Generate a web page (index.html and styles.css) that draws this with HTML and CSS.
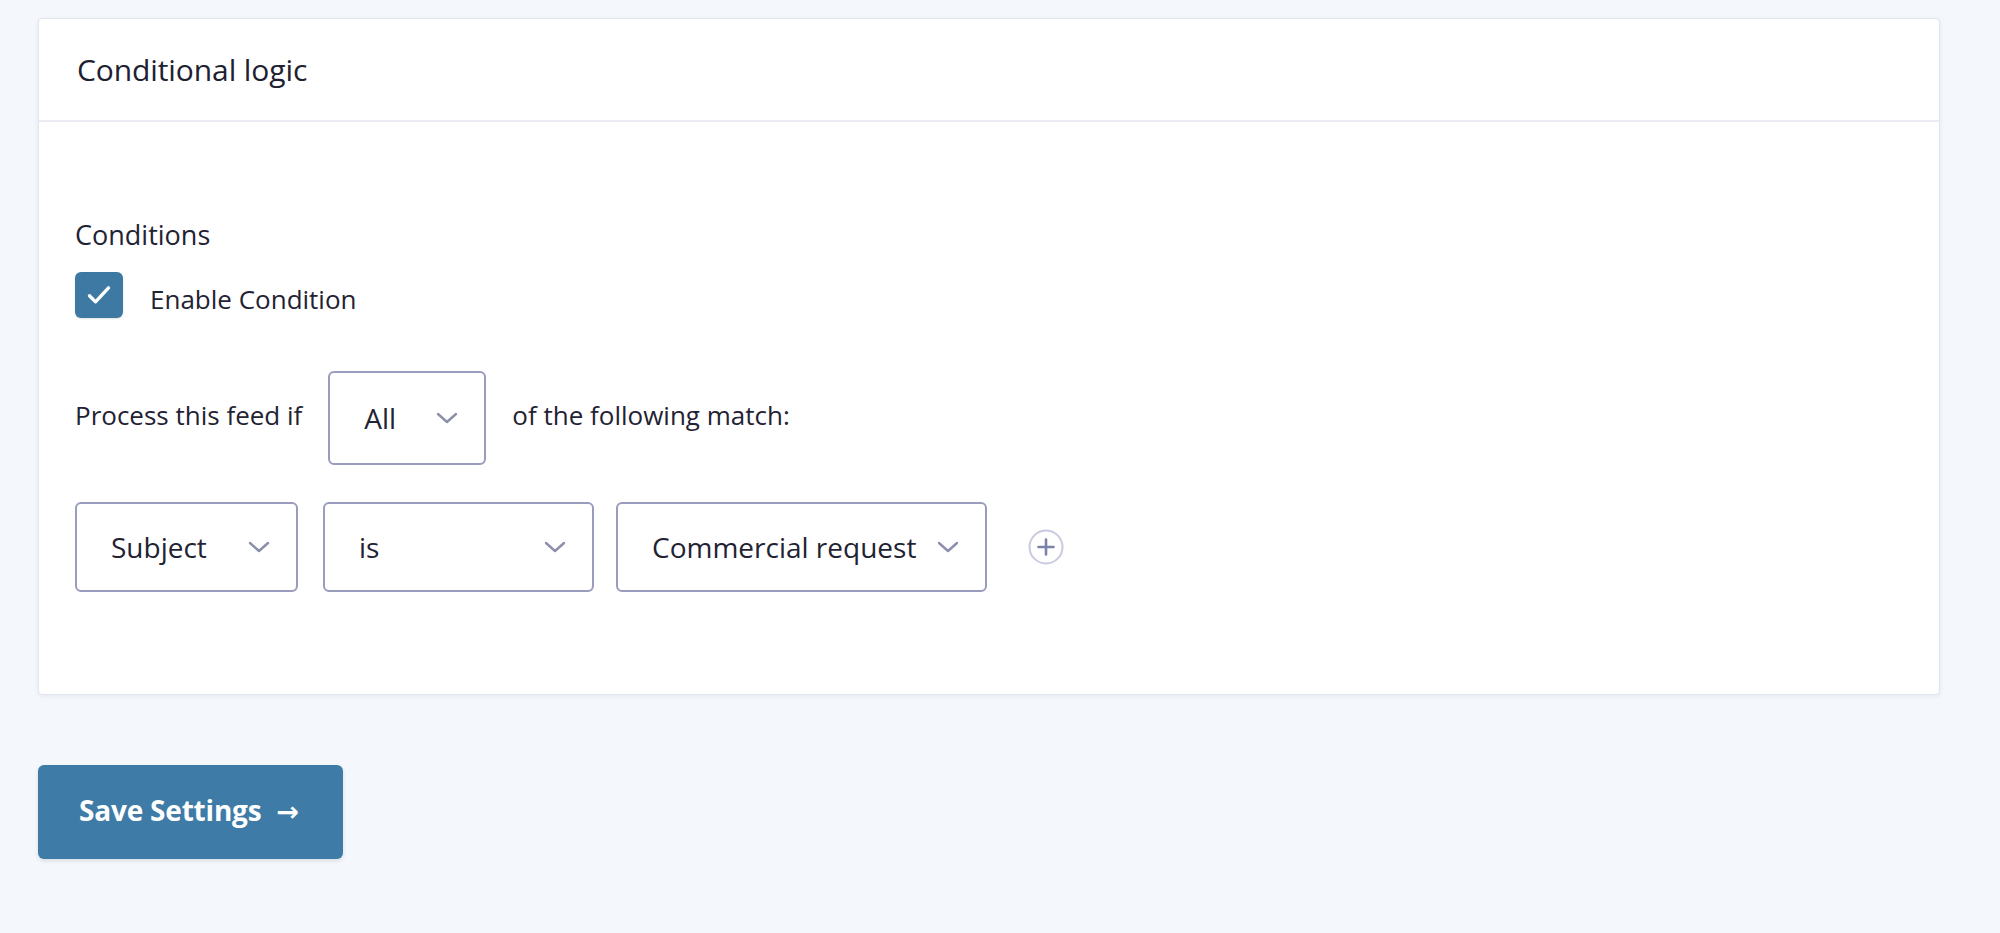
FILE: index.html
```html
<!DOCTYPE html>
<html lang="en">
<head>
<meta charset="utf-8">
<title>Conditional logic</title>
<link rel="stylesheet" href="styles.css">
</head>
<body>
<main class="page">
  <section class="card">
    <header class="card-header">
      <h2 class="card-title">Conditional logic</h2>
    </header>
    <div class="card-body">
      <div class="field-label">Conditions</div>
      <label class="check-row">
        <span class="checkbox">
          <svg viewBox="0 0 24 24" width="38" height="38" aria-hidden="true"><path d="M6 12.5l3.8 3.8L18 7.5" fill="none" stroke="#fff" stroke-width="2.1" stroke-linecap="round" stroke-linejoin="round"/></svg>
        </span>
        <span class="check-text">Enable Condition</span>
      </label>
      <div class="match-row">
        <span class="inline-text">Process this feed if</span>
        <div class="select select-all">
          <span class="select-value">All</span>
          <svg class="chevron" viewBox="0 0 22 12" width="22" height="12" aria-hidden="true"><path d="M2 2l9 8 9-8" fill="none" stroke="currentColor" stroke-width="2.4" stroke-linecap="round" stroke-linejoin="round"/></svg>
        </div>
        <span class="inline-text">of the following match:</span>
      </div>
      <div class="rule-row">
        <div class="select select-field">
          <span class="select-value">Subject</span>
          <svg class="chevron" viewBox="0 0 22 12" width="22" height="12" aria-hidden="true"><path d="M2 2l9 8 9-8" fill="none" stroke="currentColor" stroke-width="2.4" stroke-linecap="round" stroke-linejoin="round"/></svg>
        </div>
        <div class="select select-op">
          <span class="select-value">is</span>
          <svg class="chevron" viewBox="0 0 22 12" width="22" height="12" aria-hidden="true"><path d="M2 2l9 8 9-8" fill="none" stroke="currentColor" stroke-width="2.4" stroke-linecap="round" stroke-linejoin="round"/></svg>
        </div>
        <div class="select select-val">
          <span class="select-value">Commercial request</span>
          <svg class="chevron" viewBox="0 0 22 12" width="22" height="12" aria-hidden="true"><path d="M2 2l9 8 9-8" fill="none" stroke="currentColor" stroke-width="2.4" stroke-linecap="round" stroke-linejoin="round"/></svg>
        </div>
        <button class="add-btn" type="button" aria-label="Add condition">
          <svg viewBox="0 0 36 36" width="36" height="36" aria-hidden="true">
            <circle cx="18" cy="18" r="16.5" fill="none" stroke="#c8cadf" stroke-width="2"/>
            <path d="M18 10.5v15M10.5 18h15" stroke="#7a82a8" stroke-width="2.6" stroke-linecap="round"/>
          </svg>
        </button>
      </div>
    </div>
  </section>
  <button class="save-btn" type="button">Save Settings <span class="arrow">&rarr;</span></button>
</main>
</body>
</html>
```

FILE: styles.css
```css
* { box-sizing: border-box; }

html, body {
  margin: 0;
  padding: 0;
  background: #f4f7fb;
}

body {
  font-family: "Open Sans", "Noto Sans", sans-serif;
  color: #1f2333;
}

.page {
  padding: 18px 0 40px 38px;
  width: 1940px;
}

.card {
  background: #fff;
  border: 1px solid #e2e4ee;
  border-radius: 4px;
  box-shadow: 0 1px 4px rgba(40, 45, 90, 0.08);
}

.card-header {
  height: 103px;
  display: flex;
  align-items: center;
  padding-left: 38px;
  border-bottom: 2px solid #ebecf3;
}

.card-title {
  margin: 0;
  font-size: 30px;
  font-weight: 400;
  letter-spacing: -0.1px;
  color: #1d2131;
}

.card-body {
  padding: 95px 35px 102px 36px;
}

.field-label {
  font-size: 27px;
  line-height: 36px;
  color: #1f2333;
}

.check-row {
  display: flex;
  align-items: center;
  gap: 27px;
  margin-top: 19px;
}

.checkbox {
  width: 48px;
  height: 46px;
  border-radius: 6px;
  background: #3e79a4;
  display: flex;
  align-items: center;
  justify-content: center;
  box-shadow: 0 1px 2px rgba(0, 0, 0, 0.12);
}

.check-text {
  font-size: 26px;
  padding-top: 8px;
  color: #1f2333;
}

.match-row {
  display: flex;
  align-items: center;
  gap: 26px;
  margin-top: 53px;
}

.inline-text {
  font-size: 26px;
  color: #1f2333;
  padding-bottom: 6px;
}

.select {
  height: 94px;
  border: 2px solid #9a9cbd;
  border-radius: 6px;
  background: #fff;
  display: flex;
  align-items: center;
  justify-content: space-between;
  padding: 0 26px 0 34px;
}

.select-value {
  font-size: 28px;
  color: #1f2333;
}

.chevron {
  color: #8c8fab;
  flex: none;
}

.select-all { width: 158px; }

.rule-row {
  display: flex;
  align-items: center;
  margin-top: 37px;
}

.rule-row .select { height: 90px; }

.select-field { width: 223px; margin-right: 25px; }
.select-op { width: 271px; margin-right: 22px; }
.select-val { width: 371px; margin-right: 41px; }

.add-btn {
  border: 0;
  padding: 0;
  background: none;
  width: 36px;
  height: 36px;
  display: flex;
}

.save-btn {
  margin-top: 70px;
  width: 305px;
  height: 94px;
  border: 0;
  border-radius: 6px;
  background: #3e7ba6;
  color: #fff;
  font-family: "Open Sans", "Noto Sans", sans-serif;
  font-weight: 700;
  font-size: 28px;
  letter-spacing: -0.2px;
  text-align: left;
  padding: 0 0 4px 41px;
  box-shadow: 0 2px 4px rgba(30, 40, 80, 0.12);
}

.save-btn .arrow {
  font-family: "DejaVu Sans", sans-serif;
  font-weight: 700;
  font-size: 27px;
  margin-left: 8px;
}
```
